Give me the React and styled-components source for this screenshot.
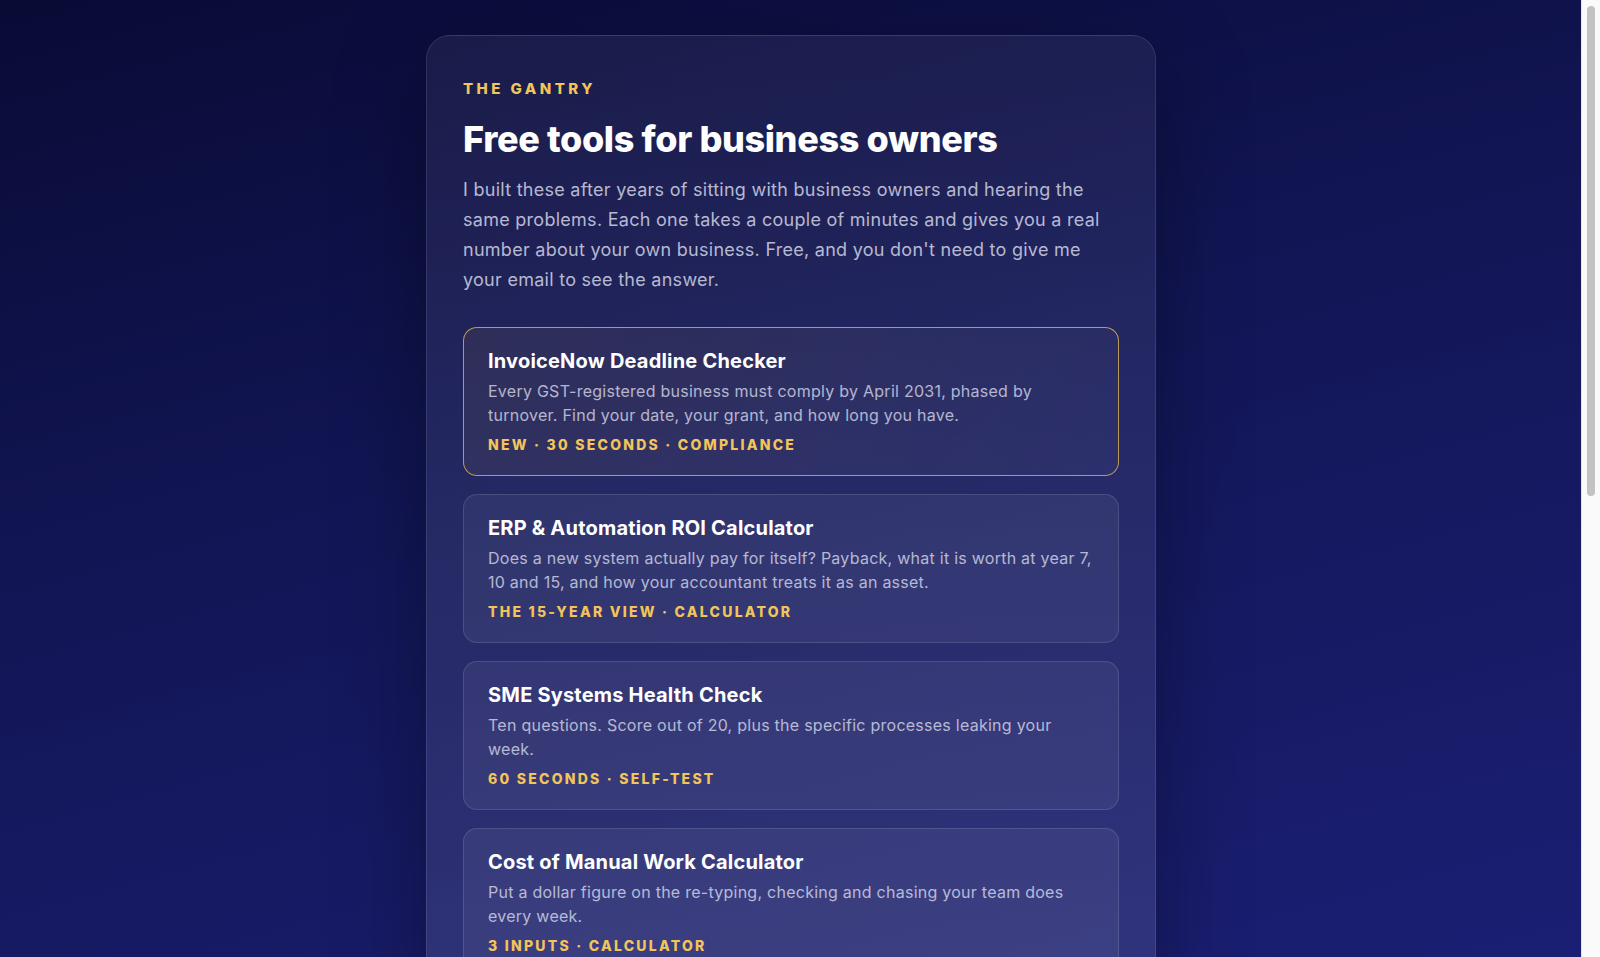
import styled, { createGlobalStyle } from "styled-components";

const GlobalStyle = createGlobalStyle`
  html {
    background: linear-gradient(165deg, #090b35 0%, #121656 45%, #1b1f74 100%);
    background-color: #11144f;
    background-attachment: fixed;
    min-height: 100%;
  }
  body {
    margin: 0;
    font-family: Inter, "Noto Sans", "Liberation Sans", sans-serif;
    color: #fff;
    -webkit-font-smoothing: antialiased;
  }
`;

const Page = styled.main`
  display: flex;
  justify-content: center;
  align-items: flex-start;
  padding: 35px 42px 60px 24px;
  box-sizing: border-box;
`;

/* classic scrollbar, drawn because the headless window hides its own */
const ScrollTrack = styled.div`
  position: fixed;
  top: 0;
  right: 0;
  bottom: 0;
  width: 18px;
  background: #fafafa;
  border-left: 1px solid #e4e4e4;
  z-index: 10;
`;

const ScrollThumb = styled.div`
  margin: 6px auto 0;
  width: 8px;
  height: 490px;
  border-radius: 4px;
  background: #c2c2c2;
`;

const Panel = styled.section`
  width: 656px;
  padding: 44px 36px 40px;
  border-radius: 24px;
  border: 1px solid rgba(255, 255, 255, 0.1);
  background: linear-gradient(180deg, rgba(255, 255, 255, 0.06) 0%, rgba(255, 255, 255, 0.1) 100%);
  box-shadow: 0 30px 90px rgba(0, 0, 0, 0.35);
`;

const Eyebrow = styled.div`
  font-size: 15px;
  line-height: 18px;
  font-weight: 800;
  letter-spacing: 0.23em;
  color: #f2c45a;
  text-transform: uppercase;
`;

const Heading = styled.h1`
  margin: 18px 0 0;
  font-size: 36px;
  line-height: 46px;
  font-weight: 800;
  letter-spacing: -0.01em;
  color: #fff;
`;

const Lead = styled.p`
  margin: 13px 0 0;
  font-size: 18px;
  line-height: 30px;
  letter-spacing: 0.015em;
  color: rgba(226, 228, 245, 0.78);
`;

const ToolList = styled.div`
  display: flex;
  flex-direction: column;
  gap: 18px;
  margin-top: 32px;
`;

const ToolCard = styled.a`
  display: block;
  padding: 20px 24px 21px;
  border-radius: 14px;
  text-decoration: none;
  border: 1px solid ${(p) => (p.$featured ? "rgba(236, 188, 84, 0.75)" : "rgba(255, 255, 255, 0.12)")};
  background: ${(p) =>
    p.$featured
      ? "linear-gradient(120deg, rgba(245, 196, 81, 0.07) 0%, rgba(255, 255, 255, 0.03) 100%)"
      : "rgba(255, 255, 255, 0.06)"};
  cursor: pointer;
`;

const ToolTitle = styled.h2`
  margin: 0;
  font-size: 20px;
  line-height: 26px;
  font-weight: 700;
  letter-spacing: 0.01em;
  color: #fff;
`;

const ToolDesc = styled.p`
  margin: 5px 0 0;
  font-size: 16px;
  line-height: 24px;
  letter-spacing: 0.016em;
  color: rgba(226, 228, 245, 0.75);
`;

const ToolMeta = styled.div`
  margin-top: 9px;
  font-size: 14px;
  line-height: 18px;
  font-weight: 800;
  letter-spacing: 0.16em;
  color: #f2c45a;
  text-transform: uppercase;
`;

const tools = [
  {
    title: "InvoiceNow Deadline Checker",
    desc: "Every GST-registered business must comply by April 2031, phased by turnover. Find your date, your grant, and how long you have.",
    meta: ["New", "30 seconds", "Compliance"],
    featured: true,
  },
  {
    title: "ERP & Automation ROI Calculator",
    desc: "Does a new system actually pay for itself? Payback, what it is worth at year 7, 10 and 15, and how your accountant treats it as an asset.",
    meta: ["The 15-year view", "Calculator"],
  },
  {
    title: "SME Systems Health Check",
    desc: "Ten questions. Score out of 20, plus the specific processes leaking your week.",
    meta: ["60 seconds", "Self-test"],
  },
  {
    title: "Cost of Manual Work Calculator",
    desc: "Put a dollar figure on the re-typing, checking and chasing your team does every week.",
    meta: ["3 inputs", "Calculator"],
  },
];

export default function App() {
  return (
    <>
      <GlobalStyle />
      <Page>
        <Panel>
          <Eyebrow>The Gantry</Eyebrow>
          <Heading>Free tools for business owners</Heading>
          <Lead>
            I built these after years of sitting with business owners and hearing the same problems.
            Each one takes a couple of minutes and gives you a real number about your own business.
            Free, and you don't need to give me your email to see the answer.
          </Lead>
          <ToolList>
            {tools.map((t) => (
              <ToolCard key={t.title} $featured={t.featured}>
                <ToolTitle>{t.title}</ToolTitle>
                <ToolDesc>{t.desc}</ToolDesc>
                <ToolMeta>{t.meta.join(" · ")}</ToolMeta>
              </ToolCard>
            ))}
          </ToolList>
        </Panel>
      </Page>
      <ScrollTrack>
        <ScrollThumb />
      </ScrollTrack>
    </>
  );
}
